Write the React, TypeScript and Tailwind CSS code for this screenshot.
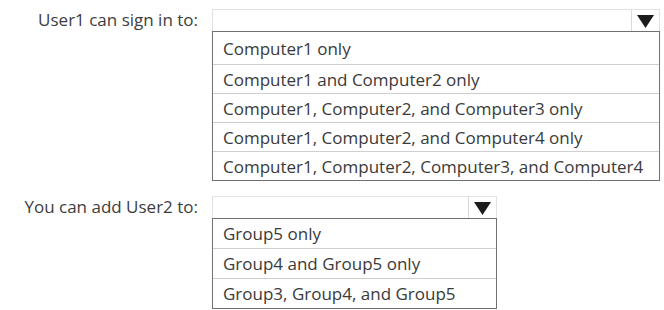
import { FC } from 'react';

type DropdownQuestionProps = {
  label: string;
  options: string[];
  width: string;
  firstRowHeight: string;
  rowHeight: string;
};

const Arrow: FC = () => (
  <svg width="17" height="13" viewBox="0 0 17 13" className="block">
    <polygon points="0,0 17,0 8.5,13" fill="#1c1c1c" />
  </svg>
);

const DropdownQuestion: FC<DropdownQuestionProps> = ({
  label,
  options,
  width,
  firstRowHeight,
  rowHeight,
}) => (
  <div className="flex">
    <div className="flex h-[22px] w-[212px] shrink-0 items-center justify-end pr-[14px] text-[17px] text-[#3d3d3d]">
      {label}
    </div>
    <div className={`flex flex-col ${width}`}>
      <div className="flex h-[22px] border-x border-t border-[#e2e2e2]">
        <div className="flex-1" />
        <div className="flex w-[28px] items-center justify-center border-l border-[#dadada] pt-[2px]">
          <Arrow />
        </div>
      </div>
      <div className="border border-[#707070] bg-white">
        {options.map((option, i) => (
          <div
            key={option}
            className={`flex items-center pl-[10px] pt-[1px] text-[17px] text-[#3a3a3a] ${
              i > 0 ? `border-t border-[#cfcfcf] ${rowHeight}` : firstRowHeight
            }`}
          >
            {option}
          </div>
        ))}
      </div>
    </div>
  </div>
);

export default function App() {
  return (
    <div
      className="flex h-[310px] w-[664px] flex-col gap-[15px] bg-white pt-[9px]"
      style={{ fontFamily: '"Open Sans", "Noto Sans", sans-serif' }}
    >
      <DropdownQuestion
        label="User1 can sign in to:"
        width="w-[448px]"
        firstRowHeight="h-[32px]"
        rowHeight="h-[29px]"
        options={[
          'Computer1 only',
          'Computer1 and Computer2 only',
          'Computer1, Computer2, and Computer3 only',
          'Computer1, Computer2, and Computer4 only',
          'Computer1, Computer2, Computer3, and Computer4',
        ]}
      />
      <DropdownQuestion
        label="You can add User2 to:"
        width="w-[285px]"
        firstRowHeight="h-[29px]"
        rowHeight="h-[30px]"
        options={['Group5 only', 'Group4 and Group5 only', 'Group3, Group4, and Group5']}
      />
    </div>
  );
}
